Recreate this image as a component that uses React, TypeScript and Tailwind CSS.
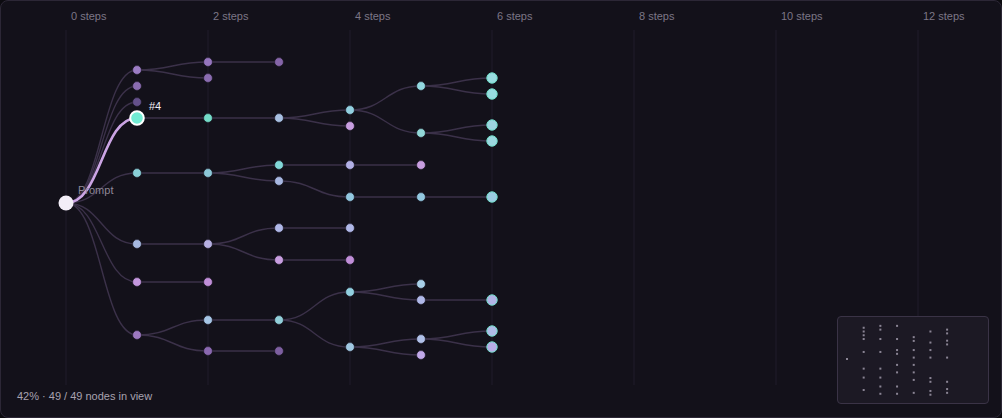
import React from 'react';

type Node = { id: string; step: number; y: number; fill: string; parent?: string; ring?: boolean };

const X0 = 66;
const STEP = 71;
const sx = (s: number) => X0 + s * STEP;

const NODES: Node[] = [
  { id: 'p', step: 0, y: 203, fill: '#f3eef8' },
  // step 1
  { id: 'a1', step: 1, y: 70, fill: '#9b7cc4', parent: 'p' },
  { id: 'a2', step: 1, y: 86, fill: '#8a6cb0', parent: 'p' },
  { id: 'a3', step: 1, y: 102, fill: '#64508a', parent: 'p' },
  { id: 'a4', step: 1, y: 118, fill: '#72ecd4', parent: 'p' },
  { id: 'a5', step: 1, y: 173, fill: '#8ad0d8', parent: 'p' },
  { id: 'a6', step: 1, y: 244, fill: '#a6b8e0', parent: 'p' },
  { id: 'a7', step: 1, y: 282, fill: '#c497de', parent: 'p' },
  { id: 'a8', step: 1, y: 335, fill: '#9c78c0', parent: 'p' },
  // step 2
  { id: 'b1', step: 2, y: 62, fill: '#9575bd', parent: 'a1' },
  { id: 'b2', step: 2, y: 78, fill: '#8a6cb0', parent: 'a1' },
  { id: 'b3', step: 2, y: 118, fill: '#74dcc8', parent: 'a4' },
  { id: 'b4', step: 2, y: 173, fill: '#8cc8d8', parent: 'a5' },
  { id: 'b5', step: 2, y: 244, fill: '#b6b0e2', parent: 'a6' },
  { id: 'b6', step: 2, y: 282, fill: '#c08ed8', parent: 'a7' },
  { id: 'b7', step: 2, y: 320, fill: '#a6c6e6', parent: 'a8' },
  { id: 'b8', step: 2, y: 351, fill: '#8a68b0', parent: 'a8' },
  // step 3
  { id: 'c1', step: 3, y: 62, fill: '#8565a8', parent: 'b1' },
  { id: 'c2', step: 3, y: 118, fill: '#a8c0e2', parent: 'b3' },
  { id: 'c3', step: 3, y: 165, fill: '#82d8d8', parent: 'b4' },
  { id: 'c4', step: 3, y: 181, fill: '#a8b8e2', parent: 'b4' },
  { id: 'c5', step: 3, y: 228, fill: '#b0b8e8', parent: 'b5' },
  { id: 'c6', step: 3, y: 260, fill: '#c89ee0', parent: 'b5' },
  { id: 'c7', step: 3, y: 320, fill: '#92d0da', parent: 'b7' },
  { id: 'c8', step: 3, y: 351, fill: '#7d5fa0', parent: 'b8' },
  // step 4
  { id: 'd1', step: 4, y: 110, fill: '#92d0e0', parent: 'c2' },
  { id: 'd2', step: 4, y: 126, fill: '#c89ee0', parent: 'c2' },
  { id: 'd3', step: 4, y: 165, fill: '#b2b0e6', parent: 'c3' },
  { id: 'd4', step: 4, y: 197, fill: '#92c8e0', parent: 'c4' },
  { id: 'd5', step: 4, y: 228, fill: '#b0b8e8', parent: 'c5' },
  { id: 'd6', step: 4, y: 260, fill: '#c08ed8', parent: 'c6' },
  { id: 'd7', step: 4, y: 292, fill: '#92d0e0', parent: 'c7' },
  { id: 'd8', step: 4, y: 347, fill: '#a0c8e2', parent: 'c7' },
  // step 5
  { id: 'e1', step: 5, y: 86, fill: '#92d8e0', parent: 'd1' },
  { id: 'e2', step: 5, y: 133, fill: '#92d8d8', parent: 'd1' },
  { id: 'e3', step: 5, y: 165, fill: '#c89ee0', parent: 'd3' },
  { id: 'e4', step: 5, y: 197, fill: '#92c8e0', parent: 'd4' },
  { id: 'e5', step: 5, y: 284, fill: '#a8d0e8', parent: 'd7' },
  { id: 'e6', step: 5, y: 300, fill: '#b0b8e8', parent: 'd7' },
  { id: 'e7', step: 5, y: 339, fill: '#b0c0e8', parent: 'd8' },
  { id: 'e8', step: 5, y: 355, fill: '#c0a8e8', parent: 'd8' },
  // step 6
  { id: 'f1', step: 6, y: 78, fill: '#98dce0', parent: 'e1', ring: true },
  { id: 'f2', step: 6, y: 94, fill: '#98dce0', parent: 'e1', ring: true },
  { id: 'f3', step: 6, y: 125, fill: '#9cd4e0', parent: 'e2', ring: true },
  { id: 'f4', step: 6, y: 141, fill: '#9cd8e0', parent: 'e2', ring: true },
  { id: 'f5', step: 6, y: 197, fill: '#9ccce2', parent: 'e4', ring: true },
  { id: 'f6', step: 6, y: 300, fill: '#b2b4e6', parent: 'e6', ring: true },
  { id: 'f7', step: 6, y: 331, fill: '#b0bce8', parent: 'e7', ring: true },
  { id: 'f8', step: 6, y: 347, fill: '#b8ace6', parent: 'e7', ring: true },
];

const byId = Object.fromEntries(NODES.map((n) => [n.id, n]));

function edgePath(a: Node, b: Node) {
  const x1 = sx(a.step);
  const x2 = sx(b.step);
  const mx = (x1 + x2) / 2;
  return `M${x1},${a.y} C${mx},${a.y} ${mx},${b.y} ${x2},${b.y}`;
}

const GRID = [0, 2, 4, 6, 8, 10, 12];
const FONT = "'Liberation Sans', Arial, sans-serif";

function Graph() {
  const edges = NODES.filter((n) => n.parent);
  return (
    <svg width={1000} height={416} className="absolute left-0 top-0">
      {GRID.map((s) => (
        <g key={s}>
          <line x1={sx(s) - 1} x2={sx(s) - 1} y1={29} y2={384} stroke="#211d2a" strokeWidth={1} />
          <text x={sx(s) + 4} y={19} fill="#7c7686" fontSize={11} fontFamily={FONT}>
            {s} steps
          </text>
        </g>
      ))}
      <g transform="translate(-1,-1)">
        {edges.map((n) =>
          n.id === 'a4' ? null : (
            <path key={n.id} d={edgePath(byId[n.parent!], n)} fill="none" stroke="#3b3149" strokeWidth={1.4} />
          ),
        )}
        <path d={edgePath(byId['p'], byId['a4'])} fill="none" stroke="#cba4e4" strokeWidth={2.6} />
        <text x={78} y={194} fill="#8e8898" fontSize={11} fontFamily={FONT}>
          Prompt
        </text>
        {NODES.map((n) => {
          const cx = sx(n.step);
          if (n.id === 'p') return <circle key={n.id} cx={cx} cy={n.y} r={7.5} fill={n.fill} />;
          if (n.id === 'a4')
            return <circle key={n.id} cx={cx} cy={n.y} r={6.8} fill={n.fill} stroke="#ffffff" strokeWidth={2} />;
          if (n.ring)
            return <circle key={n.id} cx={cx} cy={n.y} r={5.2} fill={n.fill} stroke="#6fdcc8" strokeWidth={1} />;
          return <circle key={n.id} cx={cx} cy={n.y} r={4.4} fill={n.fill} stroke="#1a1622" strokeWidth={0.6} />;
        })}
        <text x={149} y={110} fill="#f2eff6" fontSize={11} fontFamily={FONT}>
          #4
        </text>
      </g>
    </svg>
  );
}

function MiniMap() {
  const k = 0.235;
  return (
    <div className="absolute left-[836px] top-[315px] h-[88px] w-[152px] rounded-[4px] border border-[#3a3346] bg-[#1c1924]">
      <svg width={150} height={86} className="block">
        {NODES.map((n) => (
          <rect
            key={n.id}
            x={9 + n.step * STEP * k - 1}
            y={42 + (n.y - 203) * k - 1}
            width={2}
            height={2}
            fill="#8a8494"
          />
        ))}
      </svg>
    </div>
  );
}

export default function App() {
  return (
    <div className="h-[418px] w-[1002px] bg-[#0c0b10]">
      <div
        className="relative h-[418px] w-[1002px] overflow-hidden rounded-lg border border-[#2c2736] bg-[#13111a]"
        style={{ fontFamily: FONT }}
      >
        <Graph />
        <MiniMap />
        <div className="absolute left-[16px] top-[388px] text-[11px] leading-[14px] text-[#a8a2b0]">
          42% · 49 / 49 nodes in view
        </div>
      </div>
    </div>
  );
}
